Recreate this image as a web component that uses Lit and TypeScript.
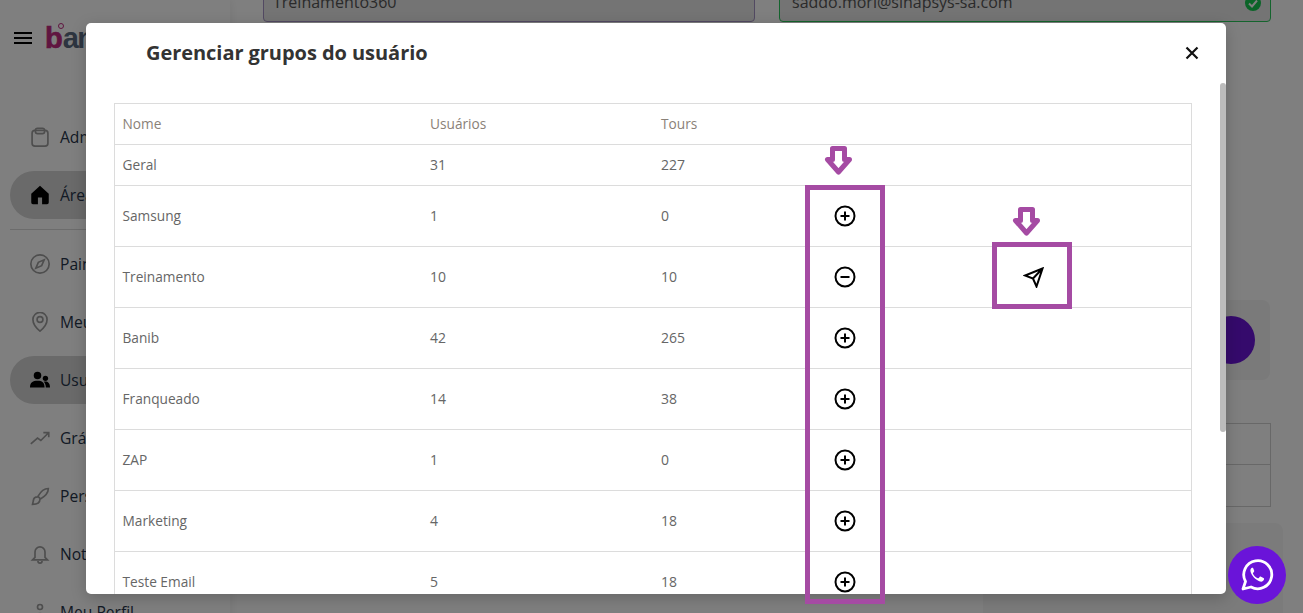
import { LitElement, html, css, svg } from "lit";
import { customElement } from "lit/decorators.js";

const ic = (body: unknown, filled = false) => html`<svg class="nav-icon ${filled ? "filled" : ""}" viewBox="0 0 24 24">${body}</svg>`;

const nav = [
  { label: "Administração", icon: svg`<rect x="2.500" y="4" width="19" height="19" rx="3.500"/><rect x="6.500" y="1.500" width="11" height="6.500" rx="2.500"/>` },
  { label: "Área de trabalho", active: true, filled: true, icon: svg`<path d="M12 1 1.500 10.500V21a2 2 0 0 0 2 2h6v-8h5v8h6a2 2 0 0 0 2-2V10.500z"/>`, divider: true },
  { label: "Painel", icon: svg`<circle cx="12" cy="12" r="11"/><path d="m17 7-3 7-7 3 3-7z"/>` },
  { label: "Meus Tours", icon: svg`<path d="M12 23s8.500-7 8.500-14a8.500 8.500 0 0 0-17 0c0 7 8.500 14 8.500 14z"/><circle cx="12" cy="9" r="3.500"/>` },
  { label: "Usuários", active: true, filled: true, icon: svg`<circle cx="9" cy="6.500" r="4.500"/><circle cx="18.500" cy="10" r="3.200"/><path d="M0 21c0-6 3.500-8 9-8s8.500 2 8.500 8zM19 21c0-3-1-5.500-2.500-7 4.500-.8 7.500 1.500 7.500 7z"/>` },
  { label: "Gráficos", icon: svg`<path d="m1 19 8-7 4 3 9-9M16 5.500h6.500V11"/>` },
  { label: "Personalizar", icon: svg`<path d="M22 3c-5 0-10 5-12.500 9.500l3 3C17 13 22 8 22 3zM9.500 13C5 13 4 16 4 18l-1 4c5 0 9-1.500 9-6.500"/>` },
  { label: "Notificações", icon: svg`<path d="M6 16V9.500a6 6 0 0 1 12 0V16l3 3H3zM9.500 20.500a2.500 2.500 0 0 0 5 0"/>` },
  { label: "Meu Perfil", icon: svg`<circle cx="12" cy="6" r="3"/><path d="M4 22c0-6 4-8 8-8s8 2 8 8"/>` },
];

const rows = [
  { n: "Geral", u: "31", t: "227", short: true },
  { n: "Samsung", u: "1", t: "0", a: "plus" },
  { n: "Treinamento", u: "10", t: "10", a: "minus", send: true },
  { n: "Banib", u: "42", t: "265", a: "plus" },
  { n: "Franqueado", u: "14", t: "38", a: "plus" },
  { n: "ZAP", u: "1", t: "0", a: "plus" },
  { n: "Marketing", u: "4", t: "18", a: "plus" },
  { n: "Teste Email", u: "5", t: "18", a: "plus" },
];

const actionIcon = (kind?: string) =>
  kind
    ? html`<svg class="act" viewBox="0 0 22 22">
        <circle cx="11" cy="11" r="9.500"></circle>
        <path d=${kind === "plus" ? "M6.500 11h9M11 6.500v9" : "M6.500 11h9"}></path>
      </svg>`
    : "";

const arrow = html`<svg viewBox="0 0 30 30">
  <path d="M8.500 2.500H20.500V13.500H25.500L14.500 26 3.500 13.500H8.500Z" fill="#fff" stroke="#a54ba3" stroke-width="5" stroke-linejoin="round"></path>
</svg>`;

@customElement("app-root")
export class AppRoot extends LitElement {
  static styles = css`
    :host { display: block; height: 613px; position: relative; overflow: hidden; background: #fff; font-family: "Open Sans", "Noto Sans", sans-serif; }
    .page { display: grid; grid-template-columns: 230px 1fr; height: 613px; }
    .side { background: #fff; box-shadow: 2px 0 8px rgba(0,0,0,.06); display: flex; flex-direction: column; overflow: hidden; }
    .brand { display: flex; align-items: center; gap: 14px; height: 38px; margin: 19px 0 0 14px; flex: none; }
    .burger { width: 18px; height: 12px; border-top: 2px solid #000; border-bottom: 2px solid #000; position: relative; box-sizing: border-box; }
    .burger::after { content: ""; position: absolute; left: 0; right: 0; top: 3px; height: 2px; background: #000; }
    .logo { position: relative; margin-left: -1px; font: 700 29px/1 "Liberation Sans", sans-serif; letter-spacing: -1.500px; color: #5a6a80; }
    .logo b { color: #c02a80; -webkit-text-stroke: .7px #c02a80; letter-spacing: 0; }
    .logo::after { content: ""; position: absolute; left: 13px; top: -1px; width: 4px; height: 4px; border: 1.500px solid #c02a80; border-radius: 50%; }
    .nav { margin-top: 56px; display: flex; flex-direction: column; padding: 0 10px; }
    .item { height: 48px; flex: none; margin-bottom: 10px; border-radius: 24px; display: flex; align-items: center; gap: 10px; padding-left: 20px; font-size: 15.600px; color: #26344a; white-space: nowrap; }
    .item.active { background: #d4d4d4; }
    .rule { height: 1px; background: #d8d8d8; margin: 0 -10px 10px 0; flex: none; }
    .nav-icon { width: 20px; height: 20px; fill: none; stroke: #9c9c9c; stroke-width: 2; flex: none; }
    .nav-icon.filled { fill: #000; stroke: none; }
    .main { padding: 0 32px 0 33px; display: flex; flex-direction: column; }
    .fields { display: grid; grid-template-columns: 492px 492px; gap: 24px; margin-top: -22px; }
    .field { height: 44px; box-sizing: border-box; border: 1px solid #a593c5; border-radius: 4px; padding: 4px 9px 0; display: flex; align-items: center; justify-content: space-between; font-size: 16px; color: #555; background: #e8e8e8; }
    .field.ok { border-color: #28c85a; padding-left: 12px; }
    .check { width: 16px; height: 16px; display: block; margin-top: 2px; }
    .card { margin: 278px 1px 0 auto; width: 300px; height: 80px; background: #f4f4f4; border-radius: 8px; display: flex; align-items: center; justify-content: flex-end; padding-right: 15px; box-sizing: border-box; }
    .dot { width: 48px; height: 48px; border-radius: 50%; background: #6a14d9; }
    .grid-box { margin: 43px 0 0 auto; width: 300px; height: 84px; box-sizing: border-box; border: 1px solid #d0d0d0; display: grid; grid-template-rows: 40px 1fr; }
    .grid-box div + div { border-top: 1px solid #d0d0d0; }
    .card2 { margin: 16px -12px 0 auto; width: 300px; height: 120px; background: #f7f7f7; border-radius: 8px; flex: none; }
    .shade { position: absolute; inset: 0; background: rgba(0,0,0,.5); }
    .modal { position: absolute; left: 86px; top: 23px; width: 1140px; height: 571px; background: #fff; border-radius: 5px; overflow: hidden; box-shadow: 0 4px 16px rgba(0,0,0,.2); display: flex; flex-direction: column; }
    .head { height: 60px; flex: none; display: flex; align-items: center; justify-content: space-between; padding: 0 27px 2px 60px; box-sizing: border-box; }
    h2 { margin: 0; font-size: 20px; font-weight: 700; color: #333; letter-spacing: -.05px; }
    .close { width: 14px; height: 14px; display: block; margin-top: 2px; stroke: #111; stroke-width: 2.200; fill: none; }
    .body { padding: 20px 34px 0 28px; }
    table { width: 1078px; border-collapse: collapse; table-layout: fixed; font-size: 13.700px; color: #666; border-left: 1px solid #dcdcdc; border-right: 1px solid #dcdcdc; }
    td, th { border: 1px solid #dcdcdc; border-width: 1px 0; padding: 0 0 2px 7.500px; text-align: left; font-weight: 400; height: 60px; box-sizing: border-box; }
    tr.short td, th { height: 41px; }
    tr:not(.short) td { height: 61px; }
    th { color: #8a8178; }
    td.num { font-size: 14px; }
    td.c { padding: 0 2px 0 0; text-align: center; }
    td.s { padding: 0 0 0 137px; }
    .act { display: block; margin: 0 auto; width: 22px; height: 22px; fill: none; stroke: #000; stroke-width: 2; }
    .send { display: block; width: 21px; height: 21px; fill: none; stroke: #000; stroke-width: 2; stroke-linejoin: miter; }
    .thumb { position: absolute; right: 0; top: 60px; width: 6px; height: 349px; border-radius: 3px; background: #bcbcbc; }
    .box { position: absolute; box-sizing: border-box; border: 5px solid #a54ba3; }
    .b1 { left: 805px; top: 185px; width: 80px; height: 419px; }
    .b2 { left: 992px; top: 242px; width: 80px; height: 67px; }
    .arrow { position: absolute; width: 30px; height: 30px; }
    .a1 { left: 824px; top: 146px; }
    .a2 { left: 1012px; top: 207px; }
    .wa { position: absolute; left: 1228px; top: 546px; width: 58px; height: 58px; border-radius: 50%; background: #6a14d9; display: flex; align-items: center; justify-content: center; }
    .wa svg { width: 34px; height: 34px; }
  `;

  render() {
    return html`
      <div class="page">
        <aside class="side">
          <div class="brand"><span class="burger"></span><span class="logo"><b>b</b>anib</span></div>
          <nav class="nav">
            ${nav.map((n) => html`
              <div class="item ${n.active ? "active" : ""}">${ic(n.icon, n.filled)}<span>${n.label}</span></div>
              ${n.divider ? html`<div class="rule"></div>` : ""}
            `)}
          </nav>
        </aside>
        <main class="main">
          <div class="fields">
            <div class="field">Treinamento360</div>
            <div class="field ok">saddo.mori@sinapsys-sa.com
              <svg class="check" viewBox="0 0 16 16"><circle cx="8" cy="8" r="8" fill="#16c850"></circle><path d="M4 8.500l3 3 5-6" fill="none" stroke="#fff" stroke-width="2"></path></svg>
            </div>
          </div>
          <div class="card"><span class="dot"></span></div>
          <div class="grid-box"><div></div><div></div></div>
          <div class="card2"></div>
        </main>
      </div>
      <div class="shade"></div>
      <section class="modal">
        <header class="head">
          <h2>Gerenciar grupos do usuário</h2>
          <svg class="close" viewBox="0 0 14 14"><path d="M1.500 1.500l11 11M12.500 1.500l-11 11"></path></svg>
        </header>
        <div class="body">
          <table>
            <colgroup><col style="width:308px" /><col style="width:231px" /><col style="width:152px" /><col style="width:80px" /><col /></colgroup>
            <thead><tr><th>Nome</th><th>Usuários</th><th>Tours</th><th></th><th></th></tr></thead>
            <tbody>
              ${rows.map((r) => html`
                <tr class=${r.short ? "short" : ""}>
                  <td>${r.n}</td><td class="num">${r.u}</td><td class="num">${r.t}</td>
                  <td class="c">${actionIcon(r.a)}</td>
                  <td class="s">${r.send ? html`<svg class="send" viewBox="0 0 21 21"><path d="M19.500 1.500 2 8.500l8 3 3.500 8z M19.500 1.500 10 11.500"></path></svg>` : ""}</td>
                </tr>`)}
            </tbody>
          </table>
        </div>
        <div class="thumb"></div>
      </section>
      <div class="box b1"></div>
      <div class="box b2"></div>
      <div class="arrow a1">${arrow}</div>
      <div class="arrow a2">${arrow}</div>
      <div class="wa">
        <svg viewBox="0 0 34 34" fill="none">
          <path d="M3 31l2.500-7.500A14 14 0 1 1 11 29z" stroke="#fff" stroke-width="2.800" stroke-linejoin="round"></path>
          <path d="M12.500 9.500c-1.500.5-2.500 2-2 4 1 4 5 8.500 9.500 10 2 .5 3.500-.5 4-2 .2-.8 0-1.200-.5-1.500l-2.500-1.300c-.6-.3-1-.2-1.400.3l-.8 1c-.3.300-.7.400-1.100.2-2-1-3.700-2.500-4.700-4.500-.2-.4-.1-.7.2-1l.8-1c.3-.4.300-.8.100-1.200l-1-2.500c-.2-.6-.6-.7-1.100-.5z" fill="#fff"></path>
        </svg>
      </div>
    `;
  }
}
